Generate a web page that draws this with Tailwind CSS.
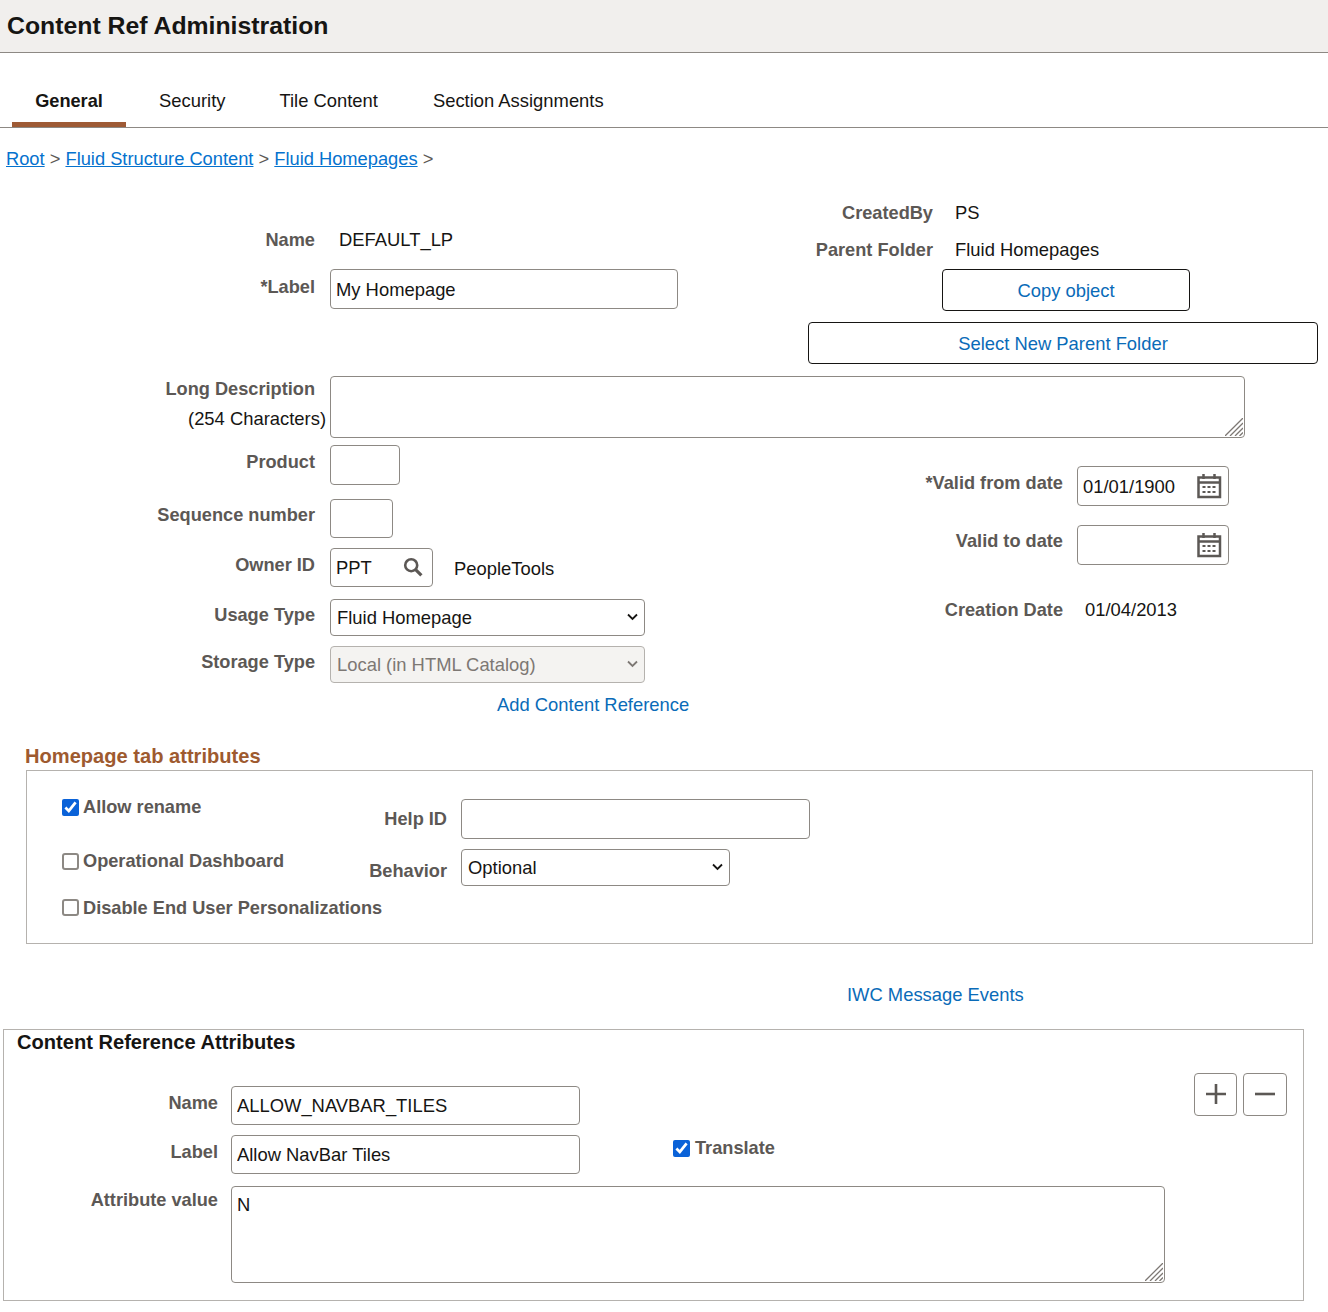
<!DOCTYPE html>
<html lang="en">
  <head>
    <meta charset="UTF-8" />
    <title>Content Ref Administration</title>
    <script src="https://cdn.jsdelivr.net/npm/@tailwindcss/browser@4"></script>
  </head>
  <body class="bg-white font-['Liberation_Sans',Arial,sans-serif] text-[18.4px] leading-[24px] text-[#161513]">
    <header class="h-[53px] bg-[#f1efed] border-b border-[#8d8984] pl-[7px] flex items-center">
      <h1 class="text-[24.8px] font-bold">Content Ref Administration</h1>
    </header>

    <!-- tabs -->
    <nav class="h-[75px] border-b border-[#8d8984] pl-[12px] flex items-end">
      <a class="h-[47px] w-[114px] pt-[9px] text-center text-[18.2px] font-bold border-b-[5px] border-[#9e5a35]">General</a>
      <a class="h-[47px] ml-[33px] pt-[9px]">Security</a>
      <a class="h-[47px] ml-[54px] pt-[9px]">Tile Content</a>
      <a class="h-[47px] ml-[55px] pt-[9px]">Section Assignments</a>
    </nav>

    <div class="mt-[19px] pl-[6px] text-[18.3px] text-[#5c5855]">
      <a class="text-[#0572ce] underline">Root</a> &gt;
      <a class="text-[#0572ce] underline">Fluid Structure Content</a> &gt;
      <a class="text-[#0572ce] underline">Fluid Homepages</a> &gt;
    </div>

    <!-- name / label + created by -->
    <section class="mt-[19px] flex h-[174px]">
      <div class="w-[808px]">
        <div class="mt-[38px] flex">
          <span class="w-[315px] text-right text-[18.2px] font-bold text-[#5c5855]">Name</span>
          <span class="ml-[24px]">DEFAULT_LP</span>
        </div>
        <div class="mt-[17px] flex">
          <span class="w-[315px] text-right text-[18.2px] font-bold text-[#5c5855] pt-[6px]">*Label</span>
          <input class="ml-[15px] w-[348px] h-[40px] border border-[#8d8984] rounded-[4px] px-[5px] pt-[2px]" value="My Homepage" />
        </div>
      </div>
      <div class="w-[520px]">
        <div class="mt-[11px] flex">
          <span class="w-[125px] text-right text-[18.2px] font-bold text-[#5c5855]">CreatedBy</span>
          <span class="ml-[22px]">PS</span>
        </div>
        <div class="mt-[13px] flex">
          <span class="w-[125px] text-right text-[18.2px] font-bold text-[#5c5855] whitespace-nowrap">Parent Folder</span>
          <span class="ml-[22px]">Fluid Homepages</span>
        </div>
        <button class="block mt-[7px] ml-[134px] w-[248px] h-[42px] pt-[2px] border border-[#161513] rounded-[4px] text-[#0a6bb8]">Copy object</button>
        <button class="block mt-[11px] w-[510px] h-[42px] pt-[2px] border border-[#161513] rounded-[4px] text-[#0a6bb8]">Select New Parent Folder</button>
      </div>
    </section>

    <!-- long description -->
    <section class="mt-[12px] flex h-[62px]">
      <div class="w-[330px] text-right">
        <div class="pr-[15px] pt-[1px] h-[31px] text-[18.2px] font-bold text-[#5c5855]">Long Description</div>
        <div class="pr-[4px]">(254 Characters)</div>
      </div>
      <div class="relative w-[915px] h-[62px]">
        <textarea class="block w-full h-full resize-none border border-[#8d8984] rounded-[4px] px-[5px]"></textarea>
        <svg class="absolute right-[2px] bottom-[2px]" width="18" height="18" viewBox="0 0 18 18" stroke="#7d7874" stroke-width="1.3"><path d="M0 18 18 0M5 18 18 5M10 18 18 10M14.500 18 18 14.500" /></svg>
      </div>
    </section>

    <section class="mt-[7px] flex h-[238px]">
      <div class="w-[900px]">
        <div class="flex">
          <span class="w-[315px] text-right text-[18.2px] font-bold text-[#5c5855] pt-[5px]">Product</span>
          <input class="ml-[15px] w-[70px] h-[40px] border border-[#8d8984] rounded-[4px]" />
        </div>
        <div class="mt-[14px] flex">
          <span class="w-[315px] text-right text-[18.2px] font-bold text-[#5c5855] pt-[4px]">Sequence number</span>
          <input class="ml-[15px] w-[63px] h-[39px] border border-[#8d8984] rounded-[4px]" />
        </div>
        <div class="mt-[10px] flex">
          <span class="w-[315px] text-right text-[18.2px] font-bold text-[#5c5855] pt-[5px]">Owner ID</span>
          <div class="ml-[15px] w-[103px] h-[39px] border border-[#8d8984] rounded-[4px] pl-[5px] flex items-center">
            <input class="w-[64px]" value="PPT" />
            <svg class="ml-[3px] mb-[2px]" width="20" height="20" viewBox="0 0 20 20" fill="none" stroke="#5c5855" stroke-width="2.6">
              <circle cx="8.2" cy="8.2" r="6" />
              <path d="M12.6 12.6 18.4 18.4" stroke-width="3.200" />
            </svg>
          </div>
          <span class="ml-[21px] pt-[9px]">PeopleTools</span>
        </div>
        <div class="mt-[12px] flex">
          <span class="w-[315px] text-right text-[18.2px] font-bold text-[#5c5855] pt-[4px]">Usage Type</span>
          <div class="relative ml-[15px] w-[315px] h-[37px]">
            <select class="block w-full h-full appearance-none border border-[#8d8984] rounded-[4px] pl-[6px]">
              <option>Fluid Homepage</option>
            </select>
            <svg class="absolute right-[7px] top-[14px]" width="11" height="8" viewBox="0 0 11 8" fill="none" stroke="#161513" stroke-width="1.8"><path d="M1 1.500 5.500 6 10 1.500" /></svg>
          </div>
        </div>
        <div class="mt-[10px] flex">
          <span class="w-[315px] text-right text-[18.2px] font-bold text-[#5c5855] pt-[4px]">Storage Type</span>
          <div class="relative ml-[15px] w-[315px] h-[37px]">
            <select disabled class="block w-full h-full appearance-none border border-[#b5b2ae] rounded-[4px] pl-[6px] bg-[#f4f3f1] text-[#7d7874] opacity-100">
              <option>Local (in HTML Catalog)</option>
            </select>
            <svg class="absolute right-[7px] top-[14px]" width="11" height="8" viewBox="0 0 11 8" fill="none" stroke="#7d7874" stroke-width="1.8"><path d="M1 1.500 5.500 6 10 1.500" /></svg>
          </div>
        </div>
      </div>
      <div class="w-[428px]">
        <div class="mt-[21px] flex">
          <span class="w-[163px] text-right text-[18.2px] font-bold text-[#5c5855] pt-[5px] whitespace-nowrap">*Valid from date</span>
          <div class="ml-[14px] w-[152px] h-[40px] border border-[#8d8984] rounded-[4px] pl-[5px] flex items-center">
            <input class="w-[113px] pt-[2px]" value="01/01/1900" />
            <svg class="mb-[1px]" width="26" height="26" viewBox="0 0 26 26" fill="none" stroke="#5c5855" stroke-width="2.500">
              <rect x="2.500" y="4.500" width="21.500" height="19.500" />
              <path d="M2 9.500H24M7.500 1V6M18.500 1V6" />
              <path d="M6.500 14h3M11.500 14h3M16.500 14h3M6.500 19h3M11.500 19h3M16.500 19h3" stroke-width="2.200" />
            </svg>
          </div>
        </div>
        <div class="mt-[19px] flex">
          <span class="w-[163px] text-right text-[18.2px] font-bold text-[#5c5855] pt-[4px]">Valid to date</span>
          <div class="ml-[14px] w-[152px] h-[40px] border border-[#8d8984] rounded-[4px] pl-[5px] flex items-center">
            <input class="w-[113px]" />
            <svg class="mb-[1px]" width="26" height="26" viewBox="0 0 26 26" fill="none" stroke="#5c5855" stroke-width="2.500">
              <rect x="2.500" y="4.500" width="21.500" height="19.500" />
              <path d="M2 9.500H24M7.500 1V6M18.500 1V6" />
              <path d="M6.500 14h3M11.500 14h3M16.500 14h3M6.500 19h3M11.500 19h3M16.500 19h3" stroke-width="2.200" />
            </svg>
          </div>
        </div>
        <div class="mt-[33px] flex">
          <span class="w-[163px] text-right text-[18.2px] font-bold text-[#5c5855]">Creation Date</span>
          <span class="ml-[22px]">01/04/2013</span>
        </div>
      </div>
    </section>

    <div class="mt-[10px] pl-[497px]"><a class="text-[#0a6bb8]">Add Content Reference</a></div>

    <h2 class="mt-[27px] pl-[25px] text-[20.1px] font-bold text-[#9e5a2f]">Homepage tab attributes</h2>

    <!-- homepage attributes -->
    <section class="mt-[2px] ml-[26px] w-[1287px] h-[174px] border border-[#b5b2ae] flex">
      <div class="w-[320px] pl-[35px] pt-[24px] whitespace-nowrap text-[18.2px] font-bold text-[#5c5855]">
        <label class="flex items-center h-[24px]">
          <input type="checkbox" checked class="shrink-0 w-[17px] h-[17px] m-0 accent-[#0a62d8]" />
          <span class="ml-[4px]">Allow rename</span>
        </label>
        <label class="flex items-center h-[24px] mt-[30px]">
          <span class="shrink-0 w-[17px] h-[17px] border-2 border-[#8d8984] rounded-[3px]"></span>
          <span class="ml-[4px]">Operational Dashboard</span>
        </label>
        <label class="flex items-center h-[24px] mt-[22px]">
          <span class="shrink-0 w-[17px] h-[17px] border-2 border-[#8d8984] rounded-[3px]"></span>
          <span class="ml-[4px] mt-[2px]">Disable End User Personalizations</span>
        </label>
      </div>
      <div class="pt-[28px]">
        <div class="flex">
          <span class="w-[100px] text-right text-[18.2px] font-bold text-[#5c5855] pt-[8px]">Help ID</span>
          <input class="ml-[14px] w-[349px] h-[40px] border border-[#8d8984] rounded-[4px]" />
        </div>
        <div class="mt-[10px] flex">
          <span class="w-[100px] text-right text-[18.2px] font-bold text-[#5c5855] pt-[10px]">Behavior</span>
          <div class="relative ml-[14px] w-[269px] h-[37px]">
            <select class="block w-full h-full appearance-none border border-[#8d8984] rounded-[4px] pl-[6px]">
              <option>Optional</option>
            </select>
            <svg class="absolute right-[7px] top-[14px]" width="11" height="8" viewBox="0 0 11 8" fill="none" stroke="#161513" stroke-width="1.8"><path d="M1 1.500 5.500 6 10 1.500" /></svg>
          </div>
        </div>
      </div>
    </section>

    <div class="mt-[39px] pl-[847px]"><a class="text-[#0a6bb8]">IWC Message Events</a></div>

    <!-- content reference attributes -->
    <section class="mt-[22px] ml-[3px] w-[1301px] h-[272px] border border-[#b5b2ae]">
      <h2 class="pl-[13px] text-[20.1px] font-bold">Content Reference Attributes</h2>
      <div class="flex">
        <div class="w-[1190px]">
          <div class="mt-[32px] flex">
            <span class="w-[214px] text-right text-[18.2px] font-bold text-[#5c5855] pt-[5px]">Name</span>
            <input class="ml-[13px] w-[349px] h-[39px] border border-[#8d8984] rounded-[4px] px-[5px] pt-[1px]" value="ALLOW_NAVBAR_TILES" />
          </div>
          <div class="mt-[10px] flex">
            <span class="w-[214px] text-right text-[18.2px] font-bold text-[#5c5855] pt-[5px]">Label</span>
            <input class="ml-[13px] w-[349px] h-[39px] border border-[#8d8984] rounded-[4px] px-[5px] pt-[1px]" value="Allow NavBar Tiles" />
            <label class="ml-[93px] mt-[1px] h-[24px] flex items-center text-[18.2px] font-bold text-[#5c5855]">
              <input type="checkbox" checked class="w-[17px] h-[17px] m-0 accent-[#0a62d8]" />
              <span class="ml-[5px]">Translate</span>
            </label>
          </div>
          <div class="mt-[12px] flex">
            <span class="w-[214px] text-right text-[18.2px] font-bold text-[#5c5855] pt-[2px]">Attribute value</span>
            <div class="relative ml-[13px] w-[934px] h-[97px]">
              <textarea class="block w-full h-full resize-none border border-[#8d8984] rounded-[4px] px-[5px] py-[6px]">N</textarea>
              <svg class="absolute right-[2px] bottom-[2px]" width="18" height="18" viewBox="0 0 18 18" stroke="#7d7874" stroke-width="1.3"><path d="M0 18 18 0M5 18 18 5M10 18 18 10M14.500 18 18 14.500" /></svg>
            </div>
          </div>
        </div>
        <div class="mt-[19px] flex gap-[6px] h-[43px]">
          <button class="w-[43px] h-[43px] border border-[#8d8984] rounded-[4px] flex items-center justify-center">
            <svg class="mb-[2px]" width="20" height="20" viewBox="0 0 20 20" stroke="#5c5855" stroke-width="2.6"><path d="M0 10H20M10 0V20" /></svg>
          </button>
          <button class="w-[44px] h-[43px] border border-[#8d8984] rounded-[4px] flex items-center justify-center">
            <svg class="mb-[2px]" width="20" height="20" viewBox="0 0 20 20" stroke="#5c5855" stroke-width="2.6"><path d="M0 10H20" /></svg>
          </button>
        </div>
      </div>
    </section>
  </body>
</html>
